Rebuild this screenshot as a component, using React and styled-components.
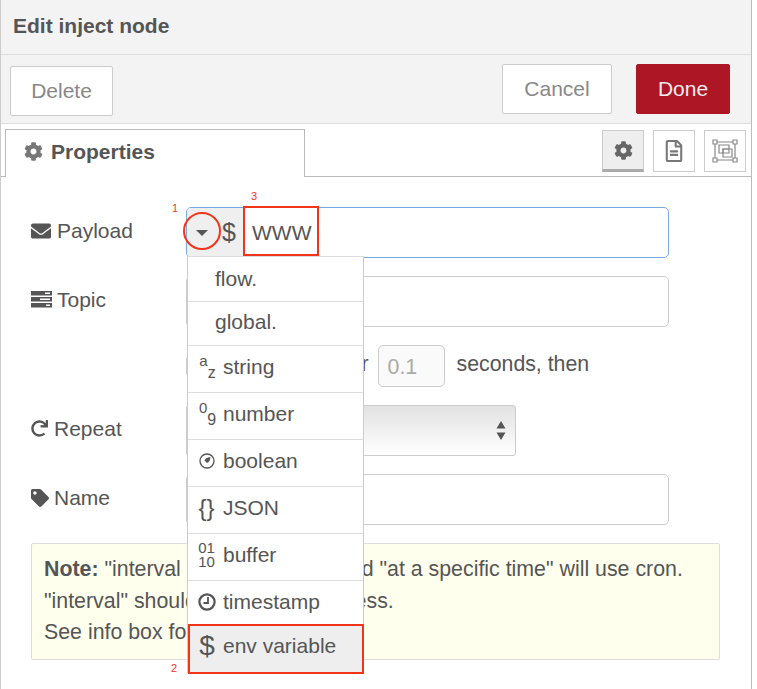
import styled, { createGlobalStyle } from "styled-components";
import { FaCog, FaEnvelope, FaTag, FaRedo, FaRegFileAlt } from "react-icons/fa";

const GlobalStyle = createGlobalStyle`
  html, body {
    margin: 0;
    padding: 0;
    background: #fff;
    overflow: hidden;
  }
  * {
    box-sizing: border-box;
  }
`;

const TEXT = "#555";
const MARK = "#f4341a";

function TasksIcon() {
  return (
    <svg width="21" height="17" viewBox="0 0 21 17">
      <path fill="#555" d="M0 0h21v4.500H0zM0 6h21v4.500H0zM0 12h21v4.500H0z" />
      <path fill="#fff" d="M14 1.500h5V3h-5zM9 7.500h10V9H9zM15 13.500h4V15h-4z" />
    </svg>
  );
}

function BoolIcon() {
  return (
    <svg width="16" height="16" viewBox="0 0 16 16">
      <circle cx="8" cy="8" r="7" fill="none" stroke="#555" strokeWidth="1.300" />
      <path fill="#555" d="M5.500 7.500C6 5.500 8 4.500 11.500 4 11 7.500 10 9.500 8 10Z" />
    </svg>
  );
}

function ClockIcon() {
  return (
    <svg width="18" height="18" viewBox="0 0 18 18">
      <circle cx="9" cy="9" r="7.600" fill="none" stroke="#555" strokeWidth="2.200" />
      <path fill="none" stroke="#555" strokeWidth="1.800" d="M10 4v6H5.500" />
    </svg>
  );
}

function GroupIcon() {
  return (
    <svg width="26" height="24" viewBox="0 0 26 24" fill="none" stroke="#888" strokeWidth="1.200">
      <path d="M3 3h20M3 21h20M3 3v18M23 3v18" />
      <path fill="#fff" d="M1 1h4v4H1zM21 1h4v4h-4zM1 19h4v4H1zM21 19h4v4h-4z" />
      <path d="M7 6h10v8H7z" />
      <path fill="#fff" d="M11 10h9v8h-9z" />
      <path d="M11 10h6v4h-6z" />
    </svg>
  );
}

function App() {
  return (
    <Page>
      <GlobalStyle />
      <Tray>
        <Header>Edit inject node</Header>
        <Toolbar>
          <Button $low>Delete</Button>
          <Actions>
            <Button $wide>Cancel</Button>
            <Button $primary>Done</Button>
          </Actions>
        </Toolbar>
        <TabBar>
          <Tab>
            <FaCog size={19} color="#777" />
            Properties
          </Tab>
          <TabTools>
            <TabTool $on><FaCog size={19} color="#666" /></TabTool>
            <TabTool><FaRegFileAlt size={22} color="#777" /></TabTool>
            <TabTool><GroupIcon /></TabTool>
          </TabTools>
        </TabBar>
        <Form>
          <Row>
            <Label $gap={6}><FaEnvelope size={20} />Payload</Label>
            <TypedInput>
              <TypeButton>
                <Caret />
                <span>$</span>
              </TypeButton>
              <Value>WWW</Value>
            </TypedInput>
          </Row>
          <Row>
            <Label $gap={5}><TasksIcon />Topic</Label>
            <Input />
          </Row>
          <DelayRow>
            <Checkbox />
            <span>Inject once after</span>
            <Delay>0.1</Delay>
            <span>seconds, then</span>
          </DelayRow>
          <Row>
            <Label $gap={6}><FaRedo size={17} />Repeat</Label>
            <Select>
              <svg width="10" height="20" viewBox="0 0 10 20">
                <path fill="#555" d="M5 0l4.500 7.500h-9zM5 19l-4.500-7.500h9z" />
              </svg>
            </Select>
          </Row>
          <Row>
            <Label $gap={5}><FaTag size={18} />Name</Label>
            <Input />
          </Row>
          <Note>
            <b>Note:</b> "interval between times" and "at a specific time" will use cron.<br />
            "interval" should be 596 days or less.<br />
            See info box for details.
          </Note>
        </Form>
      </Tray>

      <Menu>
        {MENU.map((m) => (
          <MenuItem key={m.label} $height={m.height} $active={m.active} $indent={m.indent} $lift={m.lift}>
            {m.icon && <IconSlot>{m.icon}</IconSlot>}
            {m.label}
          </MenuItem>
        ))}
      </Menu>

      <MarkCircle />
      <MarkBox $left={243} $top={206} $width={76} $height={50} />
      <MarkBox $left={188} $top={624} $width={176} $height={50} />
      <MarkNum $left={172} $top={202}>1</MarkNum>
      <MarkNum $left={251} $top={190}>3</MarkNum>
      <MarkNum $left={171} $top={662}>2</MarkNum>
    </Page>
  );
}

const Page = styled.div`
  position: relative;
  width: 757px;
  height: 689px;
  overflow: hidden;
  background: #fff;
  color: ${TEXT};
  font-family: "Liberation Sans", Arial, sans-serif;
  font-size: 21px;
`;
const Tray = styled.div`
  width: 752px;
  height: 689px;
  border-left: 1px solid #ccc;
  border-right: 1px solid #bbb;
`;
const Header = styled.div`
  height: 55px;
  padding: 0 0 2px 12px;
  display: flex;
  align-items: center;
  background: #f3f3f3;
  border-bottom: 1px solid #ddd;
  font-weight: bold;
`;
const Toolbar = styled.div`
  height: 69px;
  padding: 0 21px 0 9px;
  display: flex;
  align-items: center;
  justify-content: space-between;
  background: #f3f3f3;
  border-bottom: 1px solid #ddd;
`;
const Actions = styled.div`
  display: flex;
  gap: 24px;
`;
const Button = styled.div`
  width: ${(p) => (p.$primary ? "94px" : p.$wide ? "110px" : "103px")};
  height: 50px;
  margin-top: ${(p) => (p.$low ? "4px" : "0")};
  display: flex;
  align-items: center;
  justify-content: center;
  border-radius: 2px;
  border: 1px solid ${(p) => (p.$primary ? "#ad1625" : "#ccc")};
  background: ${(p) => (p.$primary ? "#ad1625" : "#fff")};
  color: ${(p) => (p.$primary ? "#eee" : "#888")};
`;
const TabBar = styled.div`
  height: 53px;
  padding: 5px 5px 0 4px;
  display: flex;
  justify-content: space-between;
  border-bottom: 1px solid #bbb;
`;
const Tab = styled.div`
  width: 300px;
  height: 48px;
  padding: 0 0 4px 18px;
  display: flex;
  align-items: center;
  gap: 8px;
  background: #fff;
  border: 1px solid #bbb;
  border-bottom: none;
  font-weight: bold;
`;
const TabTools = styled.div`
  display: flex;
  gap: 9px;
  padding-top: 1px;
`;
const TabTool = styled.div`
  width: 42px;
  height: 42px;
  display: flex;
  align-items: center;
  justify-content: center;
  border: 1px solid #ccc;
  background: ${(p) => (p.$on ? "#eee" : "#fff")};
  ${(p) => p.$on && "border-bottom: 3px solid #aaa;"}
`;
const Form = styled.div`
  padding: 30px 0 0 30px;
  display: flex;
  flex-direction: column;
  gap: 18px;
`;
const Row = styled.div`
  display: flex;
  align-items: center;
`;
const Label = styled.div`
  width: 155px;
  padding-bottom: 4px;
  display: flex;
  align-items: center;
  gap: ${(p) => p.$gap}px;
`;
const Input = styled.div`
  width: 483px;
  height: 51px;
  background: #fff;
  border: 1px solid #ccc;
  border-radius: 5px;
`;
const TypedInput = styled(Input)`
  display: flex;
  align-items: stretch;
  border-color: #7aa9e0;
  overflow: hidden;
`;
const TypeButton = styled.div`
  width: 56px;
  display: flex;
  align-items: center;
  gap: 14px;
  padding-left: 9px;
  background: #efefef;
  font-size: 25px;
`;
const Caret = styled.i`
  width: 0;
  height: 0;
  border-left: 6px solid transparent;
  border-right: 6px solid transparent;
  border-top: 6px solid #555;
`;
const Value = styled.div`
  padding-left: 9px;
  display: flex;
  align-items: center;
`;
const DelayRow = styled.div`
  height: 42px;
  padding: 0 0 0 155px;
  display: flex;
  align-items: center;
  gap: 11px;
  font-size: 21.3px;
  span {
    padding-bottom: 4px;
  }
`;
const Checkbox = styled.div`
  width: 20px;
  height: 20px;
  border: 1px solid #ccc;
  border-radius: 3px;
`;
const Delay = styled.div`
  width: 67px;
  height: 42px;
  padding: 2px 0 0 9px;
  display: flex;
  align-items: center;
  margin-left: -2px;
  margin-right: 1px;
  background: #fafafa;
  border: 1px solid #ccc;
  border-radius: 5px;
  color: #aaa;
`;
const Select = styled.div`
  width: 330px;
  height: 51px;
  padding-right: 9px;
  display: flex;
  align-items: center;
  justify-content: flex-end;
  border: 1px solid #ccc;
  border-radius: 3px;
  background: linear-gradient(#e2e2e2, #fff);
`;
const Note = styled.div`
  width: 689px;
  height: 117px;
  padding: 10px 12px;
  font-size: 21.35px;
  line-height: 31.5px;
  background: #ffffee;
  border: 1px solid #ddd;
  border-radius: 2px;
`;
const Menu = styled.div`
  position: absolute;
  left: 187px;
  top: 256px;
  width: 177px;
  background: #fff;
  border: 1px solid #ccc;
  border-top-color: #ddd;
  border-bottom: none;
`;
const MenuItem = styled.div`
  height: ${(p) => p.$height}px;
  padding-bottom: ${(p) => p.$lift}px;
  display: flex;
  align-items: center;
  padding-left: ${(p) => p.$indent || 0}px;
  border-bottom: 1px solid #ddd;
  background: ${(p) => (p.$active ? "#eee" : "#fff")};
`;
const IconSlot = styled.span`
  width: 35px;
  display: flex;
  justify-content: center;
  padding-left: 2px;
`;
const Stack = styled.span`
  display: inline-flex;
  margin-left: 2px;
  small {
    font-size: 15px;
    line-height: 1;
    position: relative;
    top: -6px;
  }
  small.low {
    font-size: 16px;
    top: 6px;
  }
`;
const Glyph = styled.span`
  font-size: ${(p) => (p.$big ? "28px" : "24px")};
  line-height: 1;
  margin-left: ${(p) => (p.$big ? "1px" : "0")};
`;
const Bits = styled.span`
  font-size: 15px;
  line-height: 14px;
  text-align: center;
`;
const MarkCircle = styled.div`
  position: absolute;
  left: 183px;
  top: 212px;
  width: 38px;
  height: 38px;
  border: 2px solid ${MARK};
  border-radius: 50%;
`;
const MarkBox = styled.div`
  position: absolute;
  left: ${(p) => p.$left}px;
  top: ${(p) => p.$top}px;
  width: ${(p) => p.$width}px;
  height: ${(p) => p.$height}px;
  border: 2px solid ${MARK};
`;
const MarkNum = styled.div`
  position: absolute;
  left: ${(p) => p.$left}px;
  top: ${(p) => p.$top}px;
  font-size: 11px;
  color: ${MARK};
`;

const MENU = [
  { label: "flow.", height: 45, indent: 27, lift: 0 },
  { label: "global.", height: 44, indent: 27, lift: 4 },
  { label: "string", height: 47, lift: 4, icon: <Stack><small>a</small><small className="low">z</small></Stack> },
  { label: "number", height: 47, lift: 4, icon: <Stack><small>0</small><small className="low">9</small></Stack> },
  { label: "boolean", height: 47, lift: 4, icon: <BoolIcon /> },
  { label: "JSON", height: 47, lift: 4, icon: <Glyph>{"{}"}</Glyph> },
  { label: "buffer", height: 47, lift: 4, icon: <Bits>01<br />10</Bits> },
  { label: "timestamp", height: 45, lift: 2, icon: <ClockIcon /> },
  { label: "env variable", height: 47, active: true, lift: 6, icon: <Glyph $big>$</Glyph> },
];

export default App;
